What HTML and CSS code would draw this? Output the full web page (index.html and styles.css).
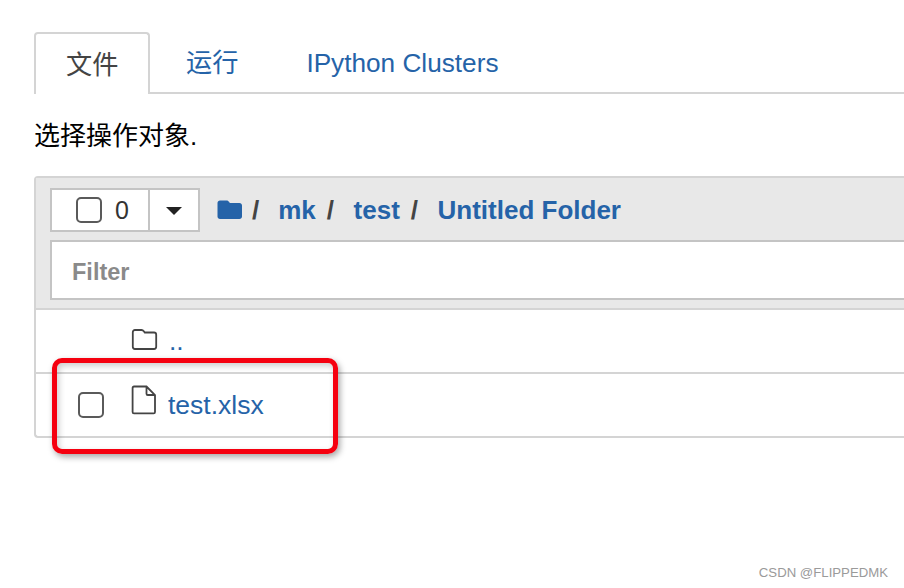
FILE: index.html
```html
<!DOCTYPE html>
<html lang="zh">
<head>
    <meta charset="UTF-8"/>
    <title>Jupyter</title>
    <link rel="stylesheet" href="styles.css">
</head>
<body>
<main class="page">
    <nav class="tabs">
        <a class="tab active">文件</a>
        <a class="tab">运行</a>
        <a class="tab">IPython Clusters</a>
    </nav>
    <p class="hint">选择操作对象.</p>

    <section class="panel">
        <div class="panel-head">
            <div class="crumbs">
                <div class="select-group">
                    <div class="select-all"><span class="check"></span><span class="count">0</span></div>
                    <div class="select-caret"><span class="caret"></span></div>
                </div>
                <svg class="folder-solid" width="26" height="22" viewBox="0 0 26 22">
                    <path d="M3 1.500h6.500c1.300 0 2 .6 2.700 1.600l.6.9h9.700c1.400 0 2.500 1.100 2.500 2.500v11c0 1.400-1.100 2.500-2.500 2.500H3c-1.400 0-2.500-1.100-2.500-2.500V4c0-1.400 1.100-2.500 2.500-2.500z" fill="#2563a8"/>
                </svg>
                <span class="sep first">/</span>
                <a class="crumb">mk</a>
                <span class="sep">/</span>
                <a class="crumb">test</a>
                <span class="sep">/</span>
                <a class="crumb">Untitled Folder</a>
            </div>
            <div class="filter">Filter</div>
        </div>
        <div class="row">
            <span class="check-slot"></span>
            <svg class="row-icon" width="28" height="24" viewBox="0 0 28 24">
                <path d="M4 2h6.500c1 0 1.700.4 2.300 1.200l1 1.300h9.200c1.300 0 2.200 1 2.200 2.200v12.100c0 1.300-1 2.200-2.200 2.200H4c-1.300 0-2.200-1-2.200-2.200V4.200C1.800 3 2.700 2 4 2z" fill="none" stroke="#444" stroke-width="1.800"/>
            </svg>
            <a class="name up">..</a>
        </div>
        <div class="row">
            <span class="check-slot"><span class="check"></span></span>
            <svg class="row-icon file" width="26" height="30" viewBox="0 0 26 30">
                <path d="M3 1.500h12.500l8.500 8.500v17c0 .8-.6 1.400-1.400 1.400H3c-.8 0-1.400-.6-1.400-1.400V3c0-.8.600-1.500 1.400-1.500zM15.500 1.500v7.200c0 .8.500 1.300 1.300 1.300H24" fill="none" stroke="#444" stroke-width="1.800"/>
            </svg>
            <a class="name">test.xlsx</a>
        </div>
    </section>
</main>
<div class="highlight"></div>
<div class="watermark">CSDN @FLIPPEDMK</div>
</body>
</html>
```
FILE: styles.css
```css
html, body {
    height: 100%;
    margin: 0;
    padding: 0;
}

body {
    background-color: white;
    color: #000;
    font-family: "Liberation Sans", "Noto Sans CJK SC", sans-serif;
    overflow: hidden;
    position: relative;
}

a {
    color: #2563a8;
}

.page {
    padding: 32px 0 0 34px;
    width: 870px;
}

.tabs {
    display: flex;
    height: 60px;
    border-bottom: 2px solid #d4d4d4;
    font-size: 26.2px;
    line-height: 30px;
}

.tab {
    padding: 16px 36px 0 32px;
    height: 44px;
}

.tab.active {
    padding: 16px 0 0 30px;
    margin-right: 4px;
    flex: none;
    width: 82px;
    color: #444;
    background: white;
    border: 2px solid #d4d4d4;
    border-bottom: none;
    border-radius: 4px 4px 0 0;
    height: 44px;
}

.hint {
    margin: 27px 0 25px 0;
    font-size: 26px;
    line-height: 30px;
}

.panel {
    border: 2px solid #d4d4d4;
    border-right: none;
    border-radius: 4px 0 0 4px;
}

.panel-head {
    background-color: #e8e8e8;
    padding: 10px 0 8px 15px;
    border-bottom: 2px solid #d4d4d4;
}

.crumbs {
    display: flex;
    align-items: center;
    height: 44px;
    margin-left: -1px;
    font-size: 26px;
    font-weight: bold;
}

.select-group {
    display: flex;
    height: 44px;
    width: 150px;
    box-sizing: border-box;
    border: 2px solid #c4c4c4;
    background: white;
    margin-right: 17px;
}

.select-all {
    width: 98px;
    display: flex;
    align-items: center;
    padding-left: 24px;
    box-sizing: border-box;
    border-right: 2px solid #c4c4c4;
}

.select-caret {
    flex: 1;
    display: flex;
    align-items: center;
    justify-content: center;
}

.caret {
    width: 0;
    height: 0;
    border-left: 8px solid transparent;
    border-right: 8px solid transparent;
    border-top: 8px solid #222;
    margin-top: 2px;
}

.check {
    display: block;
    width: 26px;
    height: 26px;
    box-sizing: border-box;
    border: 2px solid #5a5a5a;
    border-radius: 5px;
    background: white;
}

.count {
    margin-left: 13px;
    font-size: 25px;
    font-weight: normal;
    color: #333;
}

.sep {
    color: #444;
    margin: 0 19.5px 0 11px;
}

.sep.first {
    margin: 0 19px 0 9px;
}

.crumb {
    line-height: 30px;
}

.filter {
    margin: 8px 0 0 -1px;
    height: 60px;
    box-sizing: border-box;
    padding-left: 20px;
    border: 2px solid #c4c4c4;
    border-right: none;
    background: white;
    color: #8a8a8a;
    font-size: 23.5px;
    font-weight: bold;
    line-height: 60px;
}

.row {
    display: flex;
    align-items: center;
    height: 62px;
    font-size: 26.5px;
}

.row + .row {
    border-top: 2px solid #d4d4d4;
}

.check-slot {
    width: 95px;
    padding-left: 42px;
    box-sizing: border-box;
    flex: none;
}

.row-icon {
    flex: none;
    margin-bottom: 3px;
}

.row-icon.file {
    margin-bottom: 10px;
    margin-right: 2px;
}

.name {
    margin-left: 9px;
}

.name.up {
    margin-left: 10px;
}

.highlight {
    position: absolute;
    left: 52px;
    top: 358px;
    width: 286px;
    height: 96px;
    box-sizing: border-box;
    border: 5px solid #f5000f;
    border-radius: 10px;
    box-shadow: 2px 3px 6px rgba(0, 0, 0, 0.35), inset 2px 3px 6px rgba(0, 0, 0, 0.2);
}

.watermark {
    position: absolute;
    right: 16px;
    top: 565px;
    font-size: 13.2px;
    line-height: 16px;
    color: #9a9a9a;
}
```
